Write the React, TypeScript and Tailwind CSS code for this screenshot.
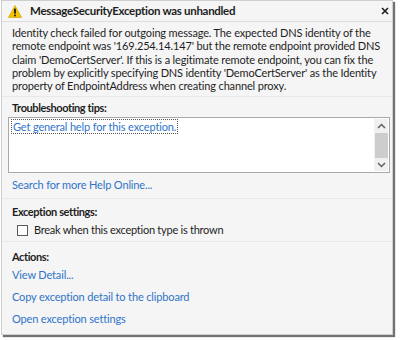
import React from "react";

// Unhandled exception helper window (Visual Studio style)

function WarningIcon() {
  return (
    <svg width="14" height="13" viewBox="0 0 14 13" aria-hidden="true">
      <path d="M7 0.6 L13.5 12.4 L0.5 12.4 Z" fill="#f5c400" stroke="#d8a800" strokeWidth="0.8" />
      <rect x="6.1" y="3.6" width="1.8" height="5" fill="#1a1a1a" />
      <rect x="6.1" y="9.6" width="1.8" height="1.7" fill="#1a1a1a" />
    </svg>
  );
}

function CloseIcon() {
  return (
    <svg width="8" height="8" viewBox="0 0 8 8" aria-hidden="true">
      <path d="M1 1 L7 7 M7 1 L1 7" stroke="#1e1e1e" strokeWidth="1.6" />
    </svg>
  );
}

function Chevron({ up }: { up?: boolean }) {
  return (
    <svg width="9" height="6" viewBox="0 0 9 6" aria-hidden="true">
      <path
        d={up ? "M1 5 L4.5 1.5 L8 5" : "M1 1 L4.5 4.5 L8 1"}
        fill="none"
        stroke="#606060"
        strokeWidth="1.5"
      />
    </svg>
  );
}

const link = "text-[#2f74c8] leading-[14px]";
const heading = "font-bold leading-[14px] tracking-[-0.4px]";

const description = [
  "Identity check failed for outgoing message. The expected DNS identity of the",
  "remote endpoint was '169.254.14.147' but the remote endpoint provided DNS",
  "claim 'DemoCertServer'. If this is a legitimate remote endpoint, you can fix the",
  "problem by explicitly specifying DNS identity 'DemoCertServer' as the Identity",
  "property of EndpointAddress when creating channel proxy.",
];

export default function App() {
  return (
    <div
      className="w-[400px] h-[340px] bg-white text-[11px] tracking-[-0.15px] text-[#1e1e1e]"
      style={{ fontFamily: 'Lato, "Noto Sans", sans-serif' }}
    >
      <div className="ml-[1px] w-[392px] h-[335px] flex flex-col bg-[#f5f5f5] border border-[#cfcfcf] shadow-[2px_2px_1px_rgba(0,0,0,0.55)]">
        {/* Title bar */}
        <div className="h-[21px] shrink-0 flex items-center pl-[6px] pr-[3px] border-b border-[#dedede]">
          <WarningIcon />
          <div className="ml-[8px] font-bold text-[11.5px] tracking-[-0.3px] flex-1 leading-[14px]">
            MessageSecurityException was unhandled
          </div>
          <CloseIcon />
        </div>

        {/* Description */}
        <div className="px-[10px] pt-[4px] pb-[4px] leading-[13.3px] border-b border-[#e8e8e8] whitespace-nowrap">
          {description.map((line) => (
            <div key={line}>{line}</div>
          ))}
        </div>

        {/* Troubleshooting tips */}
        <div className="pl-[6px] pr-[2px] pt-[4px] pb-[6px] border-b border-[#e8e8e8]">
          <div className={`pl-[4px] ${heading}`}>Troubleshooting tips:</div>
          <div className="mt-[2px] h-[56px] flex bg-white border border-[#a9a9a9]">
            <div className="flex-1 pl-[2px] pt-[1px]">
              <span className="text-[#2f74c8] border border-dotted border-[#555] px-[1px] leading-[13px] inline-block">
                Get general help for this exception.
              </span>
            </div>
            <div className="w-[14px] mr-[1px] my-[1px] bg-[#f0f0f0] flex flex-col items-center">
              <div className="h-[14px] flex items-center">
                <Chevron up />
              </div>
              <div className="w-[13px] h-[25px] bg-[#cdcdcd]" />
              <div className="flex-1" />
              <div className="h-[14px] flex items-center">
                <Chevron />
              </div>
            </div>
          </div>
          <div className={`pl-[4px] mt-[5px] ${link}`}>Search for more Help Online...</div>
        </div>

        {/* Exception settings */}
        <div className="px-[10px] pt-[6px] pb-[4px] border-b border-[#e8e8e8]">
          <div className={heading}>Exception settings:</div>
          <div className="mt-[4px] h-[14px] flex items-center pl-[5px]">
            <div className="w-[11px] h-[11px] bg-white border border-[#5a5a5a]" />
            <span className="ml-[6px] leading-[14px] tracking-[-0.25px]">Break when this exception type is thrown</span>
          </div>
        </div>

        {/* Actions */}
        <div className="px-[10px] pt-[8px] flex flex-col items-start">
          <div className={heading}>Actions:</div>
          <div className={`${link} mt-[4px]`}>View Detail...</div>
          <div className={`${link} mt-[8px]`}>Copy exception detail to the clipboard</div>
          <div className={`${link} mt-[8px]`}>Open exception settings</div>
        </div>
      </div>
    </div>
  );
}
